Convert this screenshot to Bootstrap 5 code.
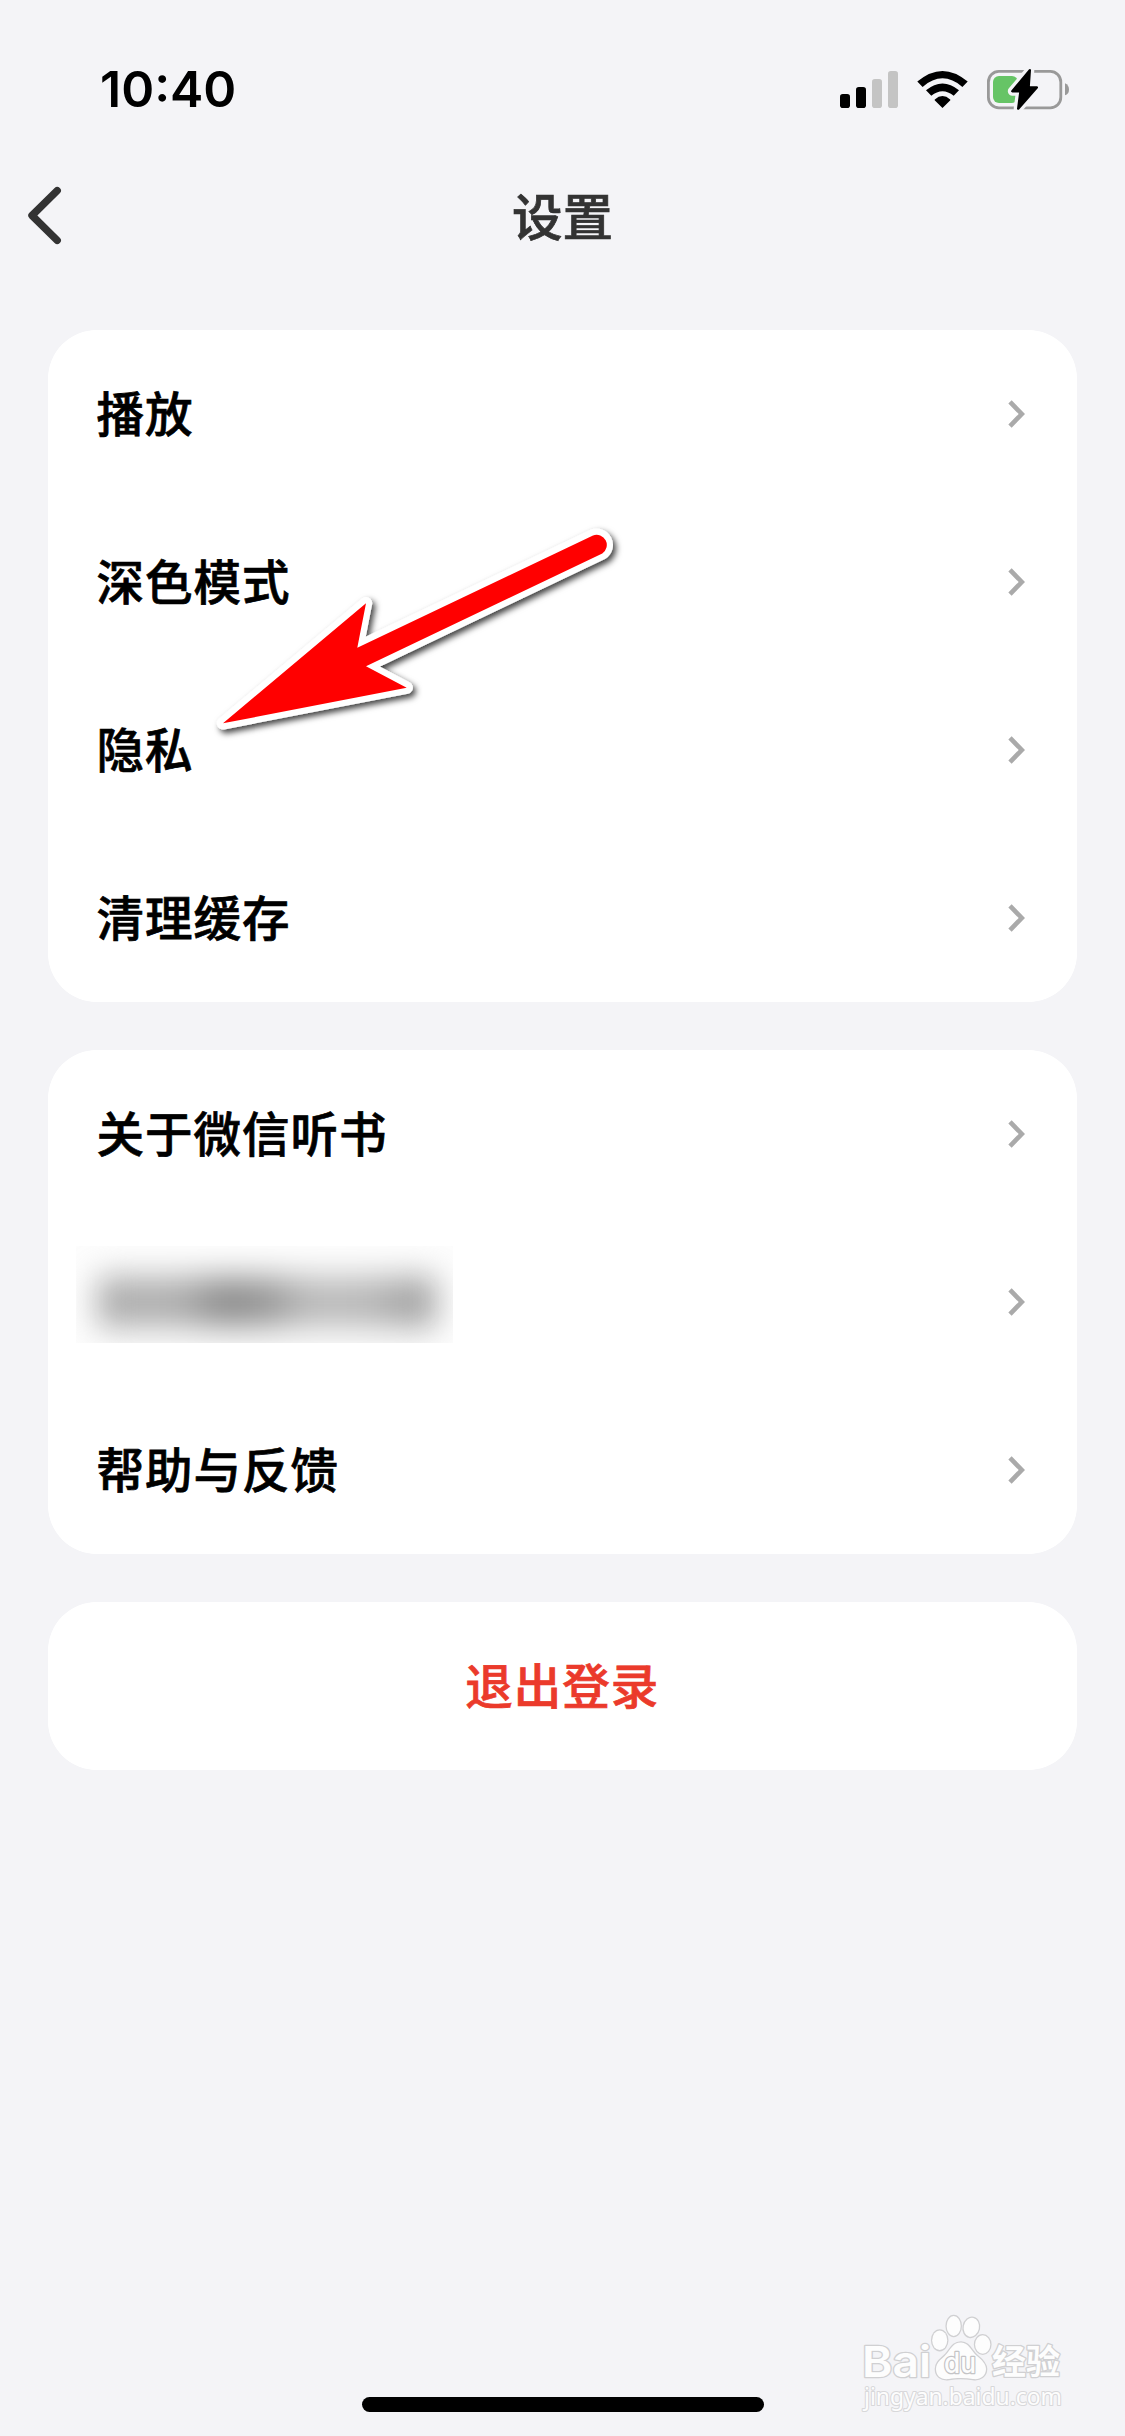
<!DOCTYPE html>
<html lang="zh-CN">
<head>
<meta charset="utf-8">
<meta name="viewport" content="width=device-width, initial-scale=1">
<title>设置</title>
<link href="https://cdn.jsdelivr.net/npm/bootstrap@5.3.0/dist/css/bootstrap.min.css" rel="stylesheet">
<style>
body{background:#f4f4f7;color:#000;font-family:"Noto Sans CJK SC",sans-serif}
.screen{width:1125px;height:2436px}
.status{height:144px;padding:50px 55px 16px 100px}
.clock{font:600 50px/76px Inter,sans-serif}
.topbar{height:138px;padding:0 24px;margin-bottom:48px}
.topbar h1{font-size:50.5px;font-weight:500;line-height:72px;color:#333;margin:1px 0 0;-webkit-text-stroke:.7px #333}
.side{width:42px}
.groups{padding:0 48px;gap:48px}
.list-group.panel{border-radius:49px;background:#fff;overflow:hidden}
.panel .list-group-item{height:168px;border:0;padding:0 49px 0 48.5px;background:#fff;color:#000;font-size:47.5px;line-height:72px;font-weight:500;letter-spacing:1px;-webkit-text-stroke:.7px currentColor}
.panel .list-group-item span{margin-top:-4px}
.panel .quit{color:#eb3a2b}
.masked{width:377px;height:97px;margin:-15px 0 0 -20.5px;overflow:hidden}
.home{width:402px;height:15px;margin-bottom:24px}
.arrow{left:205px;top:515px}
.wm{left:850px;top:2300px}
</style>
</head>
<body>
<main class="screen position-relative d-flex flex-column overflow-hidden">
  <header class="status d-flex justify-content-between align-items-center flex-shrink-0">
    <span class="clock">10:40</span>
    <svg width="230" height="44" viewBox="840 66 230 44" aria-hidden="true">
      <rect x="840" y="93" width="10" height="14" rx="2.8"/>
      <rect x="856" y="86" width="10" height="21" rx="2.8"/>
      <g fill="#c4c4c4"><rect x="872" y="78" width="10" height="29" rx="2.8"/><rect x="888" y="70" width="10" height="37" rx="2.8"/></g>
      <path d="M917.3 80.6Q942.5 59.2 967.7 80.6L962.4 85.9Q942.5 68.8 922.6 85.9ZM926 89.3Q942.5 75.6 959 89.3L953.7 94.8Q942.5 85.6 931.3 94.8ZM934.8 98.4Q942.5 91.8 950.2 98.4Q950.6 99 950.1 99.5L942.5 107L934.9 99.5Q934.4 99 934.8 98.4Z"/>
      <rect x="988.4" y="70.4" width="72.4" height="36.4" rx="10.5" fill="none" stroke="#999" stroke-width="2.8"/>
      <path d="M1065 82.2Q1069 84 1069 88.5T1065 94.3Z" fill="#999"/>
      <rect x="993" y="75" width="25" height="27" rx="6" fill="#66c466"/>
      <path d="M1029.8 69.3L1012.3 90.2H1020.5L1018.2 107.6L1036.8 86.5H1028.6Z" fill="#000" stroke="#f4f4f7" stroke-width="9" stroke-linejoin="round"/>
      <path d="M1029.8 69.3L1012.3 90.2H1020.5L1018.2 107.6L1036.8 86.5H1028.6Z" stroke="#000" stroke-width="2.4" stroke-linejoin="round"/>
    </svg>
  </header>

  <nav class="topbar d-flex justify-content-between align-items-center flex-shrink-0">
    <svg class="side" height="80" viewBox="24 173 42 80" fill="none" stroke="#333" stroke-width="7.4" stroke-linecap="round" stroke-linejoin="round" role="img" aria-label="返回"><path d="M57.2 190.7L32 215.5L57.2 240.3"/></svg>
    <h1>设置</h1>
    <span class="side"></span>
  </nav>

  <div class="groups d-flex flex-column">
    <div class="list-group panel">
      <a class="list-group-item d-flex justify-content-between align-items-center"><span>播放</span><svg width="22" height="30" fill="none" stroke="#aaa" stroke-width="4.6"><path d="M4 2.8L15.8 15L4 27.2"/></svg></a>
      <a class="list-group-item d-flex justify-content-between align-items-center"><span>深色模式</span><svg width="22" height="30" fill="none" stroke="#aaa" stroke-width="4.6"><path d="M4 2.8L15.8 15L4 27.2"/></svg></a>
      <a class="list-group-item d-flex justify-content-between align-items-center"><span>隐私</span><svg width="22" height="30" fill="none" stroke="#aaa" stroke-width="4.6"><path d="M4 2.8L15.8 15L4 27.2"/></svg></a>
      <a class="list-group-item d-flex justify-content-between align-items-center"><span>清理缓存</span><svg width="22" height="30" fill="none" stroke="#aaa" stroke-width="4.6"><path d="M4 2.8L15.8 15L4 27.2"/></svg></a>
    </div>
    <div class="list-group panel">
      <a class="list-group-item d-flex justify-content-between align-items-center"><span>关于微信听书</span><svg width="22" height="30" fill="none" stroke="#aaa" stroke-width="4.6"><path d="M4 2.8L15.8 15L4 27.2"/></svg></a>
      <a class="list-group-item d-flex justify-content-between align-items-center">
        <svg class="masked" viewBox="0 0 377 97" aria-hidden="true">
          <defs>
            <filter id="soft" x="-30%" y="-100%" width="160%" height="300%" color-interpolation-filters="sRGB"><feGaussianBlur stdDeviation="16"/></filter>
            <linearGradient id="tone"><stop offset="0" stop-color="#a0a0a0"/><stop offset=".1" stop-color="#b0b0b0"/><stop offset=".25" stop-color="#acacac"/><stop offset=".37" stop-color="#8a8a8a"/><stop offset=".5" stop-color="#959595"/><stop offset=".62" stop-color="#bababa"/><stop offset=".8" stop-color="#b8b8b8"/><stop offset="1" stop-color="#999"/></linearGradient>
          </defs>
          <rect width="377" height="97" fill="#fdfdfd"/>
          <rect x="23" y="31" width="336" height="50" fill="url(#tone)" filter="url(#soft)"/>
        </svg>
        <svg width="22" height="30" fill="none" stroke="#aaa" stroke-width="4.6"><path d="M4 2.8L15.8 15L4 27.2"/></svg></a>
      <a class="list-group-item d-flex justify-content-between align-items-center"><span>帮助与反馈</span><svg width="22" height="30" fill="none" stroke="#aaa" stroke-width="4.6"><path d="M4 2.8L15.8 15L4 27.2"/></svg></a>
    </div>
    <div class="list-group panel">
      <a class="list-group-item quit d-flex justify-content-center align-items-center"><span>退出登录</span></a>
    </div>
  </div>

  <svg class="arrow position-absolute" width="425" height="235" viewBox="205 515 425 235" aria-hidden="true">
    <defs><filter id="drop" x="-10%" y="-10%" width="120%" height="125%"><feDropShadow dx="3" dy="3.5" stdDeviation="3.2" flood-color="#000" flood-opacity=".75"/></filter></defs>
    <path d="M223 723.3L366 603.3L357.3 647.7L593 535.4A10.2 10.2 0 0 1 602.3 553.4L366 666.3L406.7 687.7Z" fill="#fff" stroke="#fff" stroke-width="12.4" stroke-linejoin="round" filter="url(#drop)"/>
    <path d="M223 723.3L366 603.3L357.3 647.7L593 535.4A10.2 10.2 0 0 1 602.3 553.4L366 666.3L406.7 687.7Z" fill="#f00"/>
  </svg>

  <svg class="wm position-absolute" width="240" height="130" viewBox="850 2300 240 130">
    <g fill="#fdfdfd" stroke="#d0d0d2" stroke-width="2.6" paint-order="stroke" stroke-linejoin="round">
      <text x="862" y="2377" font-family="Inter" font-weight="600" font-size="43" textLength="69" lengthAdjust="spacingAndGlyphs">Bai</text>
      <ellipse cx="939.7" cy="2340.3" rx="7.5" ry="9.8"/><ellipse cx="953.7" cy="2326" rx="7" ry="10"/>
      <ellipse cx="971.3" cy="2327.3" rx="7.6" ry="9.6" transform="rotate(12 971.3 2327.3)"/><ellipse cx="982.7" cy="2344.5" rx="7.6" ry="9.2"/>
      <path d="M961 2342.5C969 2342.5 971 2351 977 2356C982 2360 986 2364 986 2369C986 2376 980 2380 973 2379C965 2377.6 956 2377.6 949 2379C941 2380 936 2376 936 2369C936 2362 942 2359 946 2354.5C951 2349 953 2342.5 961 2342.5Z"/>
      <text x="944" y="2373" font-family="Inter" font-weight="500" font-size="28" textLength="32" lengthAdjust="spacingAndGlyphs" stroke="#c4c4c6">du</text>
      <text x="992" y="2374" font-family="Noto Sans CJK SC" font-weight="700" font-size="34" textLength="68" lengthAdjust="spacingAndGlyphs">经验</text>
      <text x="864" y="2405" font-family="Noto Sans" font-weight="400" font-size="24" textLength="198" lengthAdjust="spacingAndGlyphs" stroke="#d8d8da" stroke-width="2.2">jingyan.baidu.com</text>
    </g>
  </svg>

  <div class="home bg-black rounded-pill mt-auto mx-auto flex-shrink-0"></div>
</main>
<script src="https://cdn.jsdelivr.net/npm/bootstrap@5.3.0/dist/js/bootstrap.bundle.min.js"></script>
</body>
</html>
